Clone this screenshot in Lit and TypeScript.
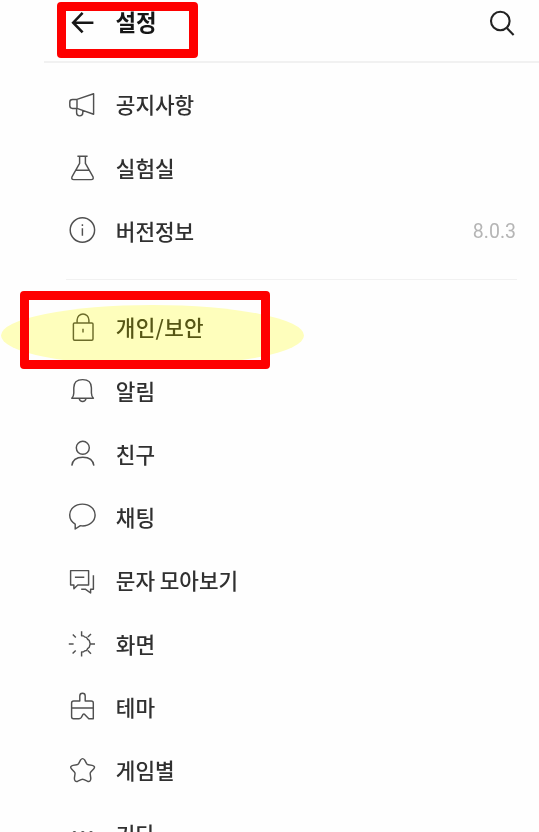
import { LitElement, html, css, svg, nothing } from "lit";
import { customElement, property } from "lit/decorators.js";

const icons: Record<string, unknown> = {
  notice: svg`<path d="M11 10.4 27.6 4.8V25.2L11 19.4M11 10.4V19.4M11 10.4H6.6Q3.8 10.4 3.8 13V16.8Q3.8 19.4 6.6 19.4H11M10.6 19.6V23.8a3.1 3.1 0 0 0 6.2 0V21.6"/>`,
  lab: svg`<path d="M11.4 4.3H21.6M13.6 4.3V11.4L6.1 24.6Q4.9 27.6 7.8 27.6H25.2Q28.1 27.6 26.9 24.6L19.4 11.4V4.3M9.8 18.2H23.2"/>`,
  info: svg`<circle cx="16.4" cy="15" r="12.2"/><path d="M16.4 13.2V20.8M16.4 9.2V11"/>`,
  lock: svg`<rect x="7.4" y="10.9" width="19.6" height="17.4" rx="1.2"/><path d="M11.1 10.9V8a5.9 6 0 0 1 11.8 0V10.9M17 16.8V20.6"/>`,
  bell: svg`<path d="M5.8 23.2H27.4Q25.4 21 25.4 18V12.8C25.4 7.4 21.8 4.6 16.6 4.6S7.8 7.4 7.8 12.8V18Q7.8 21 5.8 23.2ZM13.2 23.6a3.5 3.8 0 0 0 6.8 0"/>`,
  friend: svg`<circle cx="16.8" cy="9.8" r="6.5"/><path d="M5.8 27.7C6.4 22.1 10.6 19.2 16.8 19.2S27.2 22.1 27.9 27.7"/>`,
  chat: svg`<path d="M9.2 28V23.1C5.6 21 3.7 17.8 3.7 14.1C3.7 7.8 9.3 3.1 16.4 3.1S29.1 7.8 29.1 13.9S23.6 24.9 16.4 24.9L14 24.8Z"/>`,
  sms: svg`<path d="M4.6 5.6H22.6V20H11.8L7.9 23.8V20H4.6ZM8.9 12.3H18.3M27.4 10.2V24.3H24.6V28L19.6 24.3H15.2"/>`,
  display: svg`<path d="M15.6 3.2V7.8L17.4 7.9Q18.4 9.4 20.6 9.4Q21.4 11.6 23.2 12.4L24.2 15.9L23.2 19.4Q21.4 20.2 20.6 22.4Q18.4 22.4 17.4 23.9L15.6 24V28.6M24.2 15.9H29M21.8 9.1 25 6M21.8 22.6 25 25.7M2.8 15.9H7.6M6.8 6.4 9.8 9.4M6.6 25.6 9.7 22.4"/>`,
  theme: svg`<path d="M13.8 9.9V4.9a2.7 2.7 0 0 1 5.4 0V9.9H25.2Q27.3 9.9 27.3 12V27.7H22.8L18.7 23.4Q17.8 22.6 16.9 23.6L15.2 26.6Q14.4 27.7 13 27.7H7.6Q5.6 27.7 5.6 25.7V12Q5.6 9.9 7.7 9.9ZM5.6 16.9H27.3"/>`,
  star: svg`<path d="M14.6 4.9Q16.6 2.3 18.6 4.9L20.6 8.6Q21.2 9.6 22.4 9.8L26.2 10.4Q29.9 11.3 27.6 14.1L24.8 17Q24 17.9 24.2 19L24.8 23.2Q24.8 27.3 21.4 26.2L18 24.6Q16.6 24 15.2 24.6L11.8 26.2Q8.4 27.3 8.4 23.2L9 19Q9.2 17.9 8.4 17L5.6 14.1Q3.3 11.3 7 10.4L10.8 9.8Q12 9.6 12.6 8.6Z"/>`,
  more: svg`<circle cx="8.4" cy="15" r="1.2"/><circle cx="16.8" cy="15" r="1.2"/><circle cx="25" cy="15" r="1.2"/>`,
};

interface Item {
  icon: string;
  label: string;
  value?: string;
  marked?: boolean;
}

const general: Item[] = [
  { icon: "notice", label: "공지사항" },
  { icon: "lab", label: "실험실" },
  { icon: "info", label: "버전정보", value: "8.0.3" },
];

const preferences: Item[] = [
  { icon: "lock", label: "개인/보안", marked: true },
  { icon: "bell", label: "알림" },
  { icon: "friend", label: "친구" },
  { icon: "chat", label: "채팅" },
  { icon: "sms", label: "문자 모아보기" },
  { icon: "display", label: "화면" },
  { icon: "theme", label: "테마" },
  { icon: "star", label: "게임별" },
  { icon: "more", label: "기타" },
];

@customElement("settings-row")
class SettingsRow extends LitElement {
  @property({ attribute: false }) item!: Item;

  static styles = css`
    :host {
      display: block;
      height: 63.3px;
    }
    .row {
      position: relative;
      display: flex;
      align-items: center;
      height: 100%;
      padding: 0 23px 0 66px;
    }
    .icon {
      flex: none;
      width: 32px;
      height: 32px;
      margin-right: 17.8px;
      fill: none;
      stroke: #505050;
      stroke-width: 1.45;
      stroke-linejoin: round;
    }
    .label {
      flex: 1;
      line-height: 30px;
      padding-bottom: 0.6px;
      white-space: nowrap;
    }
    .value {
      font-family: Roboto, sans-serif;
      font-size: 19.5px;
      font-weight: 400;
      padding-top: 1px;
      color: #b5b5b5;
    }
    .highlight {
      position: absolute;
      left: 1px;
      top: 9px;
      width: 303px;
      height: 61px;
      border-radius: 50%;
      background: #ffffbd;
      mix-blend-mode: multiply;
    }
    .tinted .label {
      color: #56561c;
      letter-spacing: 0.3px;
    }
    .tinted .icon {
      stroke: #6c6c38;
    }
    .frame {
      position: absolute;
      left: 20px;
      top: -5px;
      width: 250px;
      height: 78px;
      box-sizing: border-box;
      border: 9px solid #fe0000;
      border-radius: 4px;
    }
  `;

  render() {
    const { icon, label, value, marked } = this.item;
    return html`
      <div class="row ${marked ? "tinted" : ""}">
        <svg class="icon" viewBox="0 0 32 32">${icons[icon]}</svg>
        <span class="label">${label}</span>
        ${value ? html`<span class="value">${value}</span>` : nothing}
        ${marked ? html`<div class="highlight"></div><div class="frame"></div>` : nothing}
      </div>
    `;
  }
}

@customElement("app-root")
class AppRoot extends LitElement {
  static styles = css`
    :host {
      display: block;
      height: 832px;
      overflow: hidden;
      background: #fefefe;
      color: #303030;
      font: 500 21.3px "Noto Sans CJK KR", sans-serif;
    }
    .header {
      position: relative;
      display: flex;
      height: 61px;
      box-sizing: border-box;
      padding: 0 20px 0 68px;
    }
    .header::after {
      content: "";
      position: absolute;
      left: 44px;
      right: 0;
      bottom: -2px;
      height: 2px;
      background: #f1f1f1;
    }
    .glyph {
      flex: none;
      height: 46px;
      fill: none;
      stroke: #161616;
    }
    .back {
      width: 30px;
      stroke-width: 2.6;
    }
    .search {
      width: 36px;
      stroke: #222;
      stroke-width: 2.1;
    }
    .title {
      flex: 1;
      margin: 0 0 0 17.5px;
      font-size: 22.4px;
      font-weight: 700;
      line-height: 43px;
      color: #161616;
    }
    .frame {
      position: absolute;
      left: 57px;
      top: 2px;
      width: 141px;
      height: 56px;
      box-sizing: border-box;
      border: 9px solid #fe0000;
      border-radius: 4px;
    }
    .group {
      padding-top: 12px;
    }
    .divider {
      height: 1px;
      margin: 16px 22px 4px 66px;
      background: #f1f1f1;
    }
  `;

  private rows(items: Item[]) {
    return items.map((item) => html`<settings-row .item=${item}></settings-row>`);
  }

  render() {
    return html`
      <header class="header">
        <svg class="glyph back" viewBox="0 0 30 46">
          <path d="M14.6 12.8 5.2 22.7 14.6 32.4M5.2 22.7H25.4" />
        </svg>
        <h1 class="title">설정</h1>
        <svg class="glyph search" viewBox="0 0 36 46">
          <circle cx="17.3" cy="21" r="9.3" />
          <path d="M23.8 28 30.6 35" />
        </svg>
        <div class="frame"></div>
      </header>
      <main>
        <section class="group">${this.rows(general)}</section>
        <div class="divider"></div>
        <section class="group">${this.rows(preferences)}</section>
      </main>
    `;
  }
}
